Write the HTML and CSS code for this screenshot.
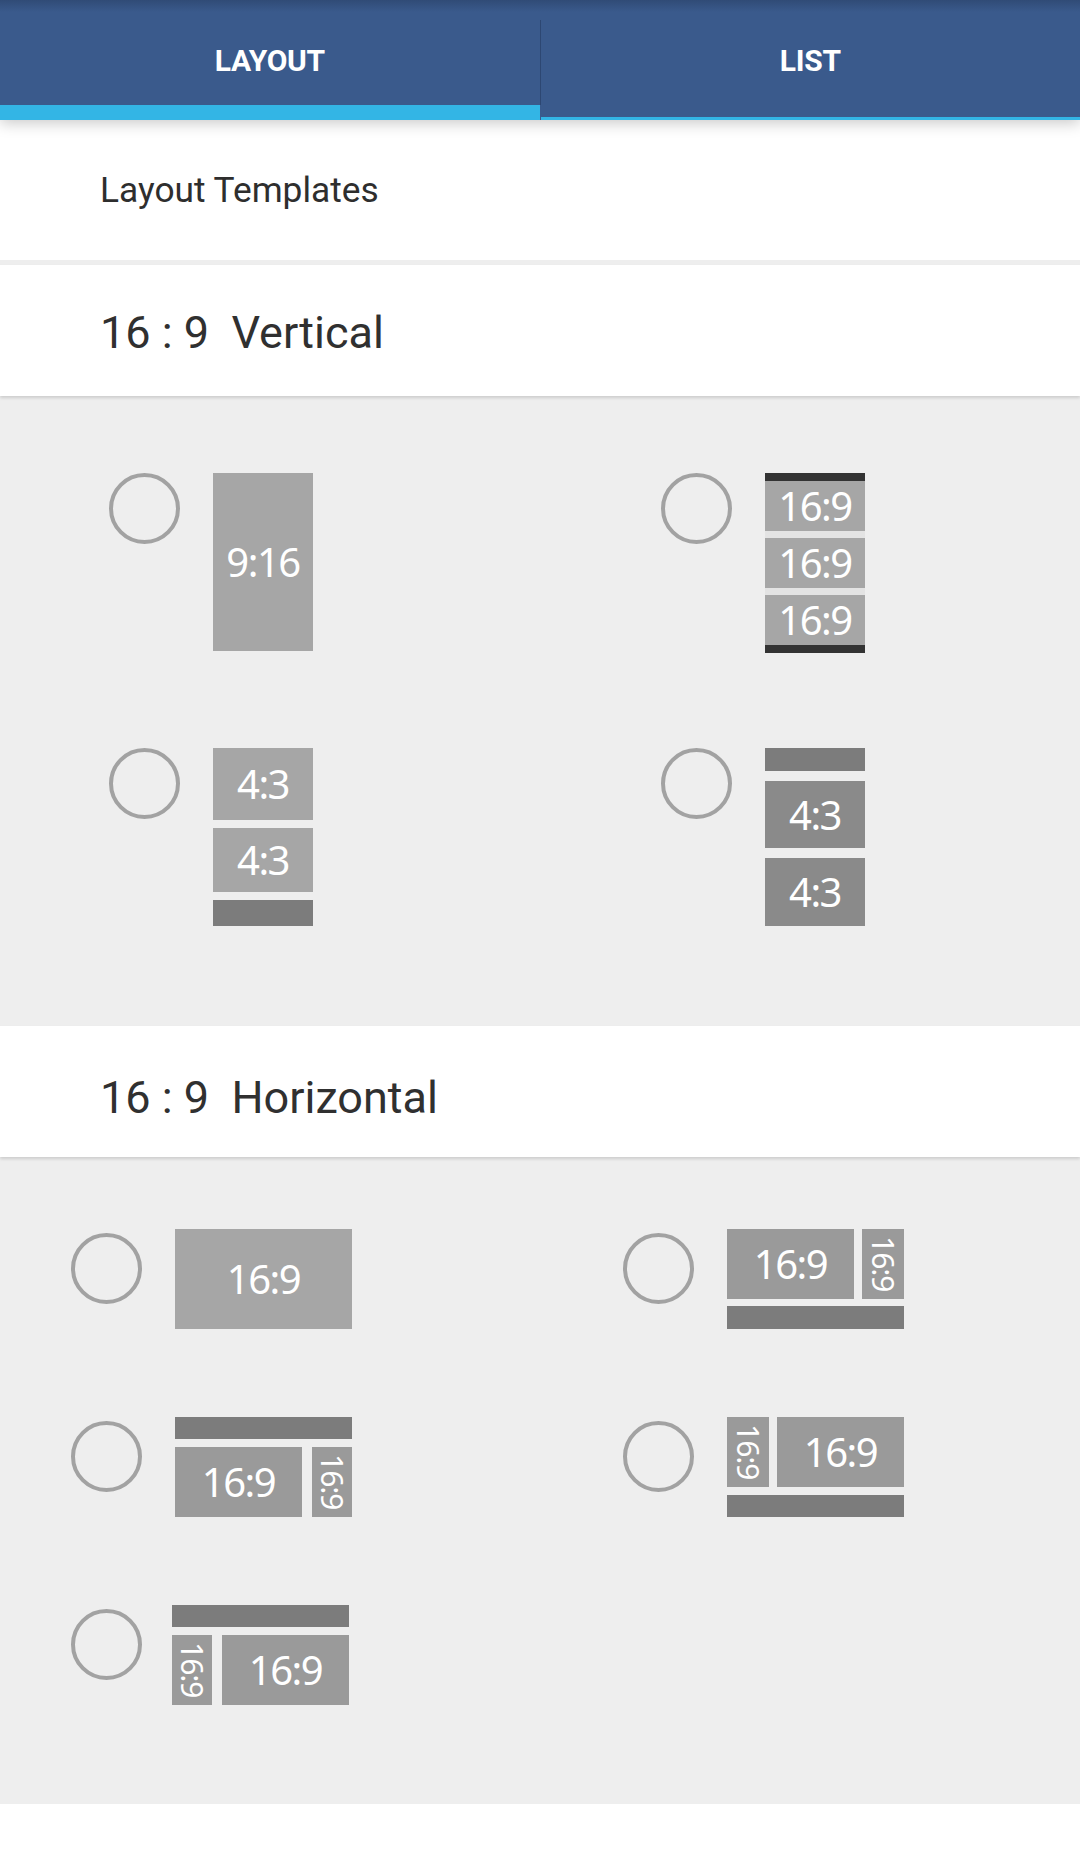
FILE: index.html
```html
<!DOCTYPE html>
<html>
<head>
<meta charset="utf-8">
<link rel="stylesheet" href="styles.css">
</head>
<body>
<header class="tabs">
  <div class="tab active"><span class="tab-label">LAYOUT</span></div>
  <div class="tab-divider"></div>
  <div class="tab"><span class="tab-label">LIST</span></div>
</header>

<div class="row-title small">Layout Templates</div>

<div class="row-title big vertical-title">16&nbsp;:&nbsp;9&nbsp;&nbsp;Vertical</div>
<section class="options vertical">
  <div class="option">
    <span class="radio"></span>
    <div class="thumb tv">
      <div class="box light fill">9:16</div>
    </div>
  </div>
  <div class="option">
    <span class="radio"></span>
    <div class="thumb tv col bars">
      <div class="box light h50">16:9</div>
      <div class="box light h50">16:9</div>
      <div class="box light h50">16:9</div>
    </div>
  </div>
  <div class="option">
    <span class="radio"></span>
    <div class="thumb tv col g8">
      <div class="box light h72">4:3</div>
      <div class="box light h64">4:3</div>
      <div class="bar h26"></div>
    </div>
  </div>
  <div class="option">
    <span class="radio"></span>
    <div class="thumb tv col g10">
      <div class="bar h23"></div>
      <div class="box mid h67">4:3</div>
      <div class="box mid h68">4:3</div>
    </div>
  </div>
</section>

<div class="row-title big horizontal-title">16&nbsp;:&nbsp;9&nbsp;&nbsp;Horizontal</div>
<section class="options horizontal">
  <div class="option">
    <span class="radio"></span>
    <div class="thumb th">
      <div class="box light fill">16:9</div>
    </div>
  </div>
  <div class="option">
    <span class="radio"></span>
    <div class="thumb th col g7">
      <div class="line g8">
        <div class="box grey main">16:9</div>
        <div class="box grey side"><span class="vtext">16:9</span></div>
      </div>
      <div class="bar h23"></div>
    </div>
  </div>
  <div class="option">
    <span class="radio"></span>
    <div class="thumb th col g8">
      <div class="bar h22"></div>
      <div class="line g10">
        <div class="box grey main">16:9</div>
        <div class="box grey side"><span class="vtext">16:9</span></div>
      </div>
    </div>
  </div>
  <div class="option">
    <span class="radio"></span>
    <div class="thumb th col g8">
      <div class="line g8">
        <div class="box grey side"><span class="vtext">16:9</span></div>
        <div class="box grey main">16:9</div>
      </div>
      <div class="bar h22"></div>
    </div>
  </div>
  <div class="option">
    <span class="radio"></span>
    <div class="thumb th col g8 shift">
      <div class="bar h22"></div>
      <div class="line g10">
        <div class="box grey side"><span class="vtext">16:9</span></div>
        <div class="box grey main">16:9</div>
      </div>
    </div>
  </div>
</section>

<div class="row-title big next"></div>
</body>
</html>
```

FILE: styles.css
```css
* { box-sizing: border-box; }

html, body {
  margin: 0;
  padding: 0;
}

body {
  background: #eeeeee;
  font-family: Roboto, "Noto Sans", "Liberation Sans", sans-serif;
  color: #303030;
}

/* ---------- tabs ---------- */
.tabs {
  position: relative;
  z-index: 2;
  display: flex;
  height: 120px;
  background: linear-gradient(#304b76 0, #3a5a8c 12px, #3a5a8c 100%);
  box-shadow: 0 3px 14px rgba(0, 0, 0, 0.22);
}

.tab {
  flex: 1;
  display: flex;
  justify-content: center;
  padding-top: 46px;
  border-bottom: 3px solid #33b5e5;
}

.tab.active {
  border-bottom-width: 15px;
}

.tab-divider {
  width: 1px;
  margin-top: 20px;
  height: 85px;
  background: #2d4772;
}

.tab-label {
  font-size: 30px;
  line-height: 30px;
  font-weight: 700;
  color: #ffffff;
  letter-spacing: -0.3px;
}

/* ---------- title rows ---------- */
.row-title {
  background: #ffffff;
  padding-left: 100px;
  white-space: nowrap;
}

.row-title.small {
  height: 140px;
  padding-top: 53px;
  font-size: 35.3px;
  line-height: 35.3px;
  margin-bottom: 5px;
  color: #2e2e2e;
}

.row-title.big {
  position: relative;
  z-index: 1;
  height: 131px;
  font-size: 45px;
  line-height: 45px;
  box-shadow: 0 2px 3px rgba(0, 0, 0, 0.14);
}

.vertical-title { padding-top: 45px; }
.horizontal-title { padding-top: 49px; }

.row-title.next {
  height: 140px;
  box-shadow: none;
}

/* ---------- option grids ---------- */
.options {
  display: grid;
  grid-template-columns: 552px 1fr;
}

.options.vertical {
  padding: 77px 0 100px 109px;
  row-gap: 95px;
}

.options.horizontal {
  padding: 72px 0 99px 71px;
  row-gap: 88px;
}

.option {
  display: flex;
  align-items: flex-start;
  gap: 33px;
}

.radio {
  flex: none;
  width: 71px;
  height: 71px;
  border: 4px solid #a2a2a2;
  border-radius: 50%;
}

.horizontal .radio { margin-top: 4px; }

/* ---------- thumbnails ---------- */
.thumb {
  display: flex;
  flex: none;
  font-family: "Noto Sans", Roboto, sans-serif;
  color: #ffffff;
}

.thumb.tv { width: 100px; height: 178px; }
.thumb.th { width: 177px; height: 100px; }
.thumb.shift { margin-left: -3px; }

.thumb.col { flex-direction: column; }

.thumb.bars {
  height: 180px;
  gap: 7px;
  border-top: 8px solid #333333;
  border-bottom: 8px solid #333333;
  background: #e3e3e3;
}

.g7 { gap: 7px; }
.g8 { gap: 8px; }
.g10 { gap: 10px; }

.box {
  display: flex;
  align-items: center;
  justify-content: center;
  font-size: 40px;
  letter-spacing: -1.5px;
  line-height: 1;
}

.box.fill { flex: 1; }
.box.light { background: #a6a6a6; }
.box.mid { background: #8a8a8a; }
.box.grey { background: #9a9a9a; }

.bar { background: #7c7c7c; }

.h22 { height: 22px; flex: none; }
.h23 { height: 23px; flex: none; }
.h26 { height: 26px; flex: none; }
.h50 { height: 50px; flex: none; }
.h64 { height: 64px; flex: none; }
.h67 { height: 67px; flex: none; }
.h68 { height: 68px; flex: none; }
.h72 { height: 72px; flex: none; }

.line {
  display: flex;
  height: 70px;
  flex: none;
}

.box.main { width: 127px; flex: none; }
.box.side { flex: 1; }

.vtext {
  writing-mode: vertical-rl;
  font-size: 30px;
  letter-spacing: -1px;
  line-height: 1;
}
```
